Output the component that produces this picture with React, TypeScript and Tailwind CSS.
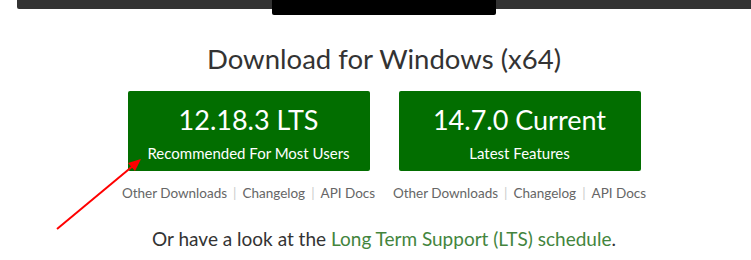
const links = ['Other Downloads', 'Changelog', 'API Docs'];

const DownloadCard = ({ version, label }: { version: string; label: string }) => (
  <div className="flex w-[242px] flex-col items-center">
    <a
      href="#"
      className="flex h-[80px] w-[242px] flex-col items-center justify-center rounded-[2px] bg-[#026e00] text-white"
    >
      <span className="mt-[3px] text-[27px] leading-[32px]">{version}</span>
      <span className="mt-[8px] text-[15px] leading-[18px]">{label}</span>
    </a>
    <div className="mt-[13px] flex items-center whitespace-nowrap text-[13.5px] leading-[18px] text-[#666]">
      {links.map((l, i) => (
        <span key={l} className="flex items-center">
          <a href="#" className="text-[#666]">{l}</a>
          {i < links.length - 1 && <span className="mx-[6px] text-[#ccc]">|</span>}
        </span>
      ))}
    </div>
  </div>
);

export default function App() {
  return (
    <div className="relative h-[260px] w-[751px] overflow-hidden bg-white font-['Lato',sans-serif] text-[#333]">
      <div className="ml-[17px]">
        {/* top bar */}
        <div className="flex h-[9px] items-start justify-center rounded-bl-[2px] bg-[#333]">
          <div className="h-[15px] w-[224px] rounded-b-[2px] bg-black" />
        </div>

        <h1 className="mt-[33px] text-center text-[27.5px] leading-[34px] text-[#333]">
          Download for Windows (x64)
        </h1>

        <div className="mt-[15px] flex justify-center gap-[29px]">
          <DownloadCard version="12.18.3 LTS" label="Recommended For Most Users" />
          <DownloadCard version="14.7.0 Current" label="Latest Features" />
        </div>

        <p className="mt-[26px] text-center text-[19px] leading-[22px] text-[#333]">
          Or have a look at the{' '}
          <a href="#" className="text-[#43853d]">Long Term Support (LTS) schedule</a>.
        </p>
      </div>

      {/* red annotation arrow */}
      <svg className="absolute left-0 top-0" width="751" height="260" viewBox="0 0 751 260">
        <line x1="57" y1="229" x2="134" y2="165" stroke="#f00" strokeWidth="2" />
        <polygon points="141,159 128,163 135,171" fill="#f00" />
      </svg>
    </div>
  );
}
